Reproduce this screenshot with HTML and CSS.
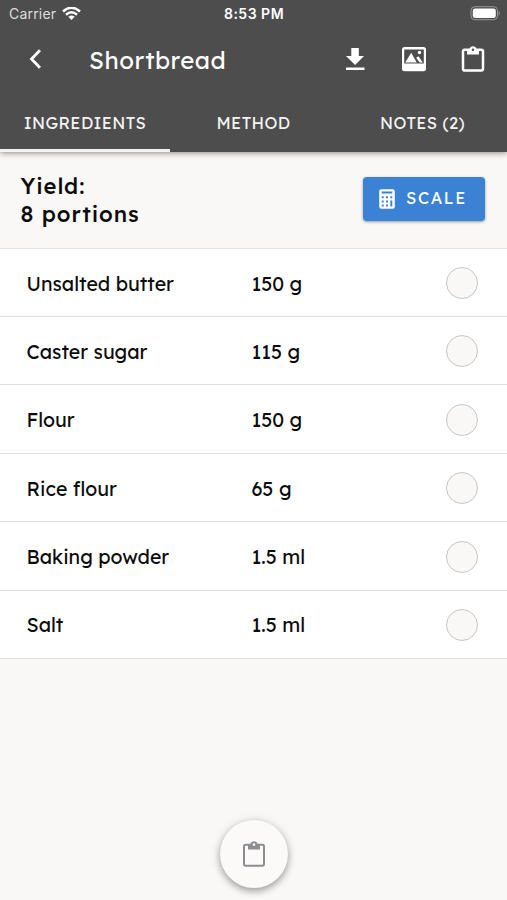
FILE: index.html
```html
<!DOCTYPE html>
<html lang="en">
<head>
<meta charset="utf-8">
<title>Shortbread</title>
<link rel="stylesheet" href="styles.css">
</head>
<body>
<header class="header">
  <div class="status">
    <div class="carrier"><span>Carrier</span>
      <svg width="19" height="14" viewBox="0 0 19 14" fill="none" stroke="#fff" stroke-width="2.500"><path d="M1 4.500Q9.500 -3.100 18 4.500M4 7.700Q9.500 2.900 15 7.700"/><path d="M9.500 13 6.300 9.700Q9.500 7.100 12.700 9.700Z" fill="#fff" stroke="none"/></svg>
    </div>
    <span class="time">8:53 PM</span>
    <svg class="battery" width="31" height="16" viewBox="0 0 31 16"><rect x="1" y=".7" width="26.500" height="13" rx="3.800" fill="none" stroke="#999"/><rect x="2.800" y="2.400" width="23" height="9.600" rx="2.300" fill="#fff"/><path d="M28.700 4.700Q31 7.200 28.700 9.700Z" fill="#999"/></svg>
  </div>
  <div class="toolbar">
    <svg class="back" width="16" height="22" viewBox="0 0 16 22"><path d="M13 2.200 4.500 11l8.500 8.800" fill="none" stroke="#fff" stroke-width="2.800"/></svg>
    <h1 class="title">Shortbread</h1>
    <div class="actions">
      <svg width="20" height="24" viewBox="0 0 20 24" fill="#fff"><path d="M6.300 1h7.500v8H19l-8.900 8.900L1 9h5.300ZM1 20.500h18.500V23H1Z"/></svg>
      <svg width="26" height="26" viewBox="0 0 26 26"><rect x="2" y="1" width="24" height="24.300" rx="2.500" fill="#fff"/><path d="M4.200 3.500H23.800v14H4.200Z" fill="#4d4d4d"/><path d="m5.200 16.500 6-9.700 5.500 9.700ZM16.200 11.700l2.300-1.400 4.300 6.200h-3.200Z" fill="#fff"/><circle cx="19.500" cy="6.500" r="1.700" fill="#fff"/></svg>
      <svg width="24" height="28" viewBox="0 0 24 28"><rect x="2" y="4.700" width="20" height="20.800" rx="1.700" fill="none" stroke="#fff" stroke-width="2.500"/><path d="M6 4h2.500a3.600 3.600 0 0 1 7 0H18v5.500H6Z" fill="#fff"/><circle cx="12" cy="4.800" r="1.200" fill="#4d4d4d"/></svg>
    </div>
  </div>
  <nav class="tabs">
    <a class="tab tab-active">INGREDIENTS</a>
    <a class="tab">METHOD</a>
    <a class="tab">NOTES (2)</a>
  </nav>
</header>
<main>
  <section class="yield">
    <div class="yield-text"><div>Yield:</div><div>8 portions</div></div>
    <button class="scale">
      <svg width="16" height="20" viewBox="0 0 16 20"><rect x=".2" y=".2" width="15.600" height="19.600" rx="2.200" fill="#fff"/><path d="M2.700 2.600h10.600v2H2.700ZM2.700 7.300h2v1.900h-2ZM7 7.300h2v1.900H7ZM11.300 7.300h2v1.900h-2ZM2.700 11.500h2v1.900h-2ZM7 11.500h2v1.900H7ZM11.300 11.500h2v6h-2ZM2.700 15.600h2v1.900h-2ZM7 15.600h2v1.900H7Z" fill="#3b82d4"/></svg>
      <span class="scale-label">SCALE</span>
    </button>
  </section>
  <ul class="list">
    <li class="row"><span>Unsalted butter</span><span>150 g</span><i class="check"></i></li>
    <li class="row"><span>Caster sugar</span><span>115 g</span><i class="check"></i></li>
    <li class="row"><span>Flour</span><span>150 g</span><i class="check"></i></li>
    <li class="row"><span>Rice flour</span><span>65 g</span><i class="check"></i></li>
    <li class="row"><span>Baking powder</span><span>1.5 ml</span><i class="check"></i></li>
    <li class="row"><span>Salt</span><span>1.5 ml</span><i class="check"></i></li>
  </ul>
</main>
<button class="fab" aria-label="Notes">
  <svg width="24" height="28" viewBox="0 0 24 28"><rect x="2" y="4.700" width="20" height="21" rx="1.700" fill="none" stroke="#8b8d91" stroke-width="2"/><path d="M6 4h2.500a3.600 3.600 0 0 1 7 0H18v5.500H6Z" fill="#8b8d91"/><circle cx="12" cy="4.600" r="1.300" fill="#fbfaf9"/></svg>
</button>
</body>
</html>
```

FILE: styles.css
```css
* { box-sizing: border-box; }
body {
  margin: 0;
  height: 900px;
  overflow: hidden;
  background: #faf8f7;
  color: #0c0c0c;
  font-family: Lexend, Inter, "Liberation Sans", sans-serif;
  font-feature-settings: "cv11";
}
svg { display: block; flex: none; }
button { border: 0; padding: 0; font: inherit; font-feature-settings: inherit; }
.header {
  position: relative;
  height: 152.400px;
  background: #4d4d4d;
  color: #fff;
  box-shadow: 0 1px 6px rgba(0, 0, 0, .45);
}
.status {
  display: grid;
  grid-template-columns: 1fr auto 1fr;
  align-items: center;
  height: 27px;
  padding: 0 7px 0 9px;
  font-family: Inter, "Liberation Sans", sans-serif;
  font-feature-settings: normal;
  font-size: 14px;
}
.carrier { display: flex; align-items: center; gap: 6px; color: #dedede; letter-spacing: .2px; }
.time { font-weight: 600; font-size: 14px; letter-spacing: .5px; margin-right: 1px; }
.battery { justify-self: end; margin-right: -1px; }
.toolbar { display: flex; align-items: center; height: 64px; padding: 0 22px 0 27px; }
.title { flex: 1; margin: 2px 0 0 46px; font-size: 24px; font-weight: 400; letter-spacing: .5px; }
.actions { display: flex; align-items: center; gap: 35px; }
.tabs { display: grid; grid-template-columns: 1fr 1fr 1fr; height: 61.400px; }
.tab {
  display: flex;
  align-items: center;
  justify-content: center;
  padding-top: 4px;
  font-size: 16.500px;
  letter-spacing: .4px;
  border-bottom: 3px solid transparent;
  color: #f4f4f4;
}
.tab-active { border-color: #f4f2f1; margin-right: -1px; }
.yield {
  display: flex;
  align-items: center;
  justify-content: space-between;
  height: 96.200px;
  padding: 0 22px 2px 20.500px;
  border-bottom: 1.500px solid #e5e4e3;
}
.yield-text { padding-top: 2px; font-size: 22px; line-height: 28px; font-weight: 500; letter-spacing: .95px; }
.scale {
  display: flex;
  align-items: center;
  gap: 11px;
  width: 122px;
  height: 44px;
  padding-left: 16px;
  border-radius: 4px;
  background: #3b82d4;
  color: #fff;
  font-size: 16.500px;
  font-weight: 400;
  letter-spacing: 1.600px;
  box-shadow: 0 1px 3px rgba(0, 0, 0, .4);
}
.scale-label { padding-bottom: 2px; }
.list { margin: 0; padding: 0; list-style: none; background: #fff; }
.row {
  display: grid;
  grid-template-columns: 225px 1fr 32px;
  align-items: center;
  height: 68.400px;
  padding: 1.500px 29.500px 0 26.500px;
  border-bottom: 1px solid #dfdfdf;
  font-size: 19.500px;
  font-weight: 400;
}
.check { width: 32px; height: 32px; border: 1px solid #c8c6c4; border-radius: 50%; background: #faf8f7; }
.fab {
  position: absolute;
  left: 220px;
  top: 820px;
  display: flex;
  align-items: center;
  justify-content: center;
  width: 68px;
  height: 68px;
  border-radius: 50%;
  background: #fbfaf9;
  box-shadow: 0 3px 7px rgba(0, 0, 0, .32), 0 1px 12px rgba(0, 0, 0, .1);
}
```
